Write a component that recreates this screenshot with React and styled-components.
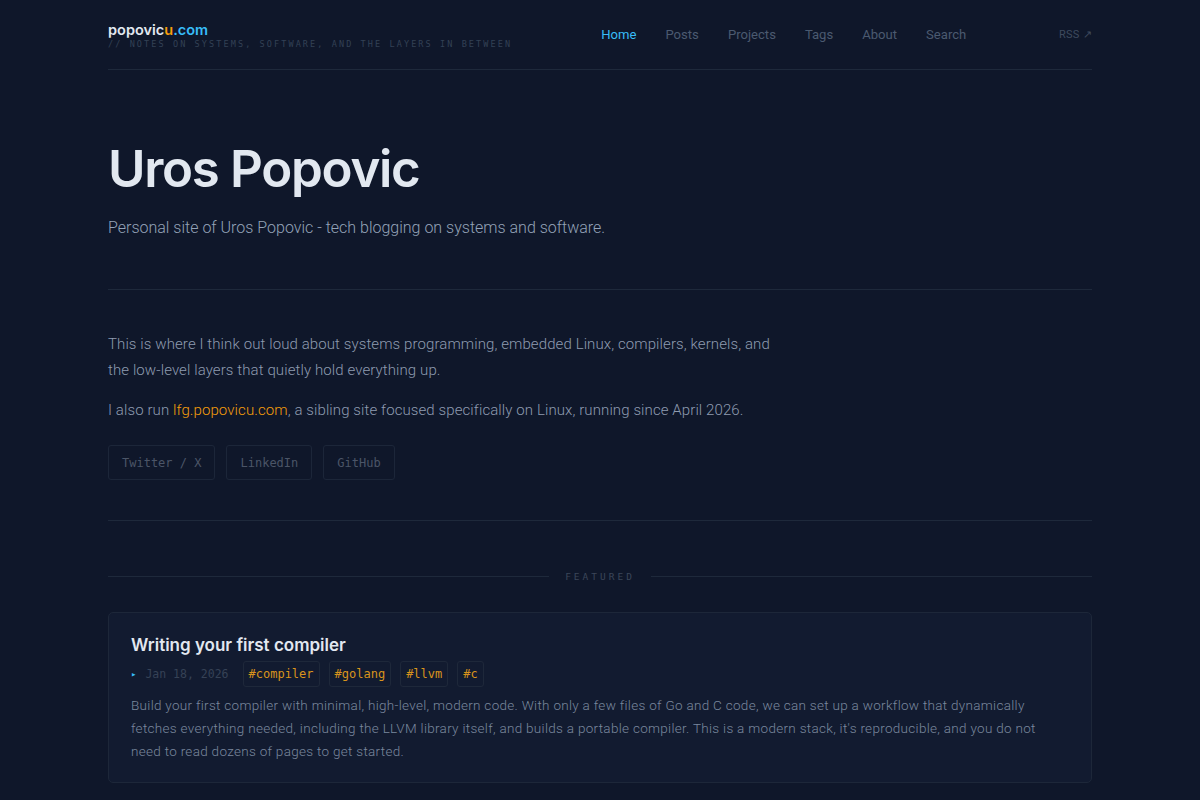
import React from 'react'
import styled, { createGlobalStyle } from 'styled-components'

const GlobalStyle = createGlobalStyle`
  html, body {
    margin: 0;
    padding: 0;
    background: #0f172a;
  }
  body {
    font-family: Roboto, "Noto Sans", sans-serif;
    color: #94a3b8;
  }
  a { text-decoration: none; }
`

const mono = `"DejaVu Sans Mono", "Liberation Mono", monospace`
const display = `Inter, "Noto Sans", sans-serif`

const Page = styled.div`
  min-height: 800px;
  background: #0f172a;
`

const Container = styled.div`
  width: 984px;
  margin: 0 auto;
`

const Header = styled.header`
  display: flex;
  align-items: center;
  height: 69px;
  border-bottom: 1px solid #1e293b;
`

const Brand = styled.div`
  display: flex;
  flex-direction: column;
  padding-top: 2px;
`

const Logo = styled.a`
  font-family: ${display};
  font-weight: 600;
  font-size: 14.5px;
  line-height: 16px;
  color: #e2e8f0;
  span { color: #f59e0b; }
  em { font-style: normal; color: #38bdf8; }
`

const Tagline = styled.div`
  font-family: ${mono};
  font-size: 8.5px;
  letter-spacing: 2.1px;
  color: #334155;
  margin-top: 1px;
  text-transform: uppercase;
`

const Nav = styled.nav`
  display: flex;
  gap: 29px;
  margin-left: 89px;
`

const NavLink = styled.a`
  font-family: Roboto, sans-serif;
  font-size: 13.1px;
  color: ${p => (p.$active ? '#38bdf8' : '#4b5a70')};
`

const Rss = styled.a`
  margin-left: auto;
  font-size: 11px;
  color: #3e4a5e;
  letter-spacing: 0.3px;
`

const Hero = styled.section`
  padding: 68px 0 52px;
  border-bottom: 1px solid #1e293b;
`

const Title = styled.h1`
  margin: 0;
  font-family: ${display};
  font-weight: 600;
  font-size: 51px;
  letter-spacing: -1.3px;
  line-height: 62px;
  color: #e2e8f0;
`

const Subtitle = styled.p`
  margin: 18px 0 0;
  font-size: 16px;
  font-weight: 300;
  color: #94a3b8;
`

const Intro = styled.section`
  padding: 41px 0 40px;
  border-bottom: 1px solid #1e293b;
`

const Para = styled.p`
  margin: 0 0 14px;
  max-width: 680px;
  font-size: 15px;
  font-weight: 300;
  line-height: 26px;
  letter-spacing: 0.1px;
  color: #8e9bb0;
  a { color: #f59e0b; }
`

const Socials = styled.div`
  display: flex;
  gap: 11px;
  margin-top: 22px;
`

const SocialBtn = styled.a`
  display: inline-flex;
  align-items: center;
  height: 33px;
  padding: 0 13px;
  border: 1px solid #1c2639;
  border-radius: 3px;
  font-family: ${mono};
  font-size: 12px;
  color: #4b5567;
`

const Featured = styled.section`
  padding-top: 50px;
`

const SectionLabel = styled.div`
  display: flex;
  align-items: center;
  gap: 16px;
  font-family: ${mono};
  font-size: 9.5px;
  letter-spacing: 3px;
  color: #3b4659;
  &::before, &::after {
    content: '';
    flex: 1;
    height: 1px;
    background: #1e293b;
  }
`

const Card = styled.article`
  margin-top: 30px;
  padding: 20px 22px 19px;
  background: #121b30;
  border: 1px solid #1d2739;
  border-radius: 5px;
`

const CardTitle = styled.h2`
  margin: 0;
  font-family: ${display};
  font-weight: 600;
  font-size: 17px;
  line-height: 24px;
  color: #e2e8f0;
`

const Meta = styled.div`
  display: flex;
  align-items: center;
  gap: 9px;
  margin-top: 4px;
`

const Date = styled.span`
  display: inline-flex;
  align-items: center;
  gap: 9px;
  margin-right: 5px;
  font-family: ${mono};
  font-size: 11.5px;
  color: #364256;
  &::before {
    content: '▸';
    color: #38bdf8;
    font-size: 9px;
  }
`

const Tag = styled.span`
  display: inline-flex;
  align-items: center;
  height: 24px;
  padding: 0 5px;
  border: 1px solid #1e283a;
  border-radius: 3px;
  font-family: ${mono};
  font-size: 12px;
  color: #d9941c;
`

const Desc = styled.p`
  margin: 7px 0 0;
  font-size: 13.5px;
  font-weight: 300;
  line-height: 23px;
  letter-spacing: 0.3px;
  color: #7a889e;
`

const navItems = ['Home', 'Posts', 'Projects', 'Tags', 'About', 'Search']
const socials = ['Twitter / X', 'LinkedIn', 'GitHub']
const tags = ['#compiler', '#golang', '#llvm', '#c']

export default function App() {
  return (
    <Page>
      <GlobalStyle />
      <Container>
        <Header>
          <Brand>
            <Logo href="#">popovic<span>u</span><em>.com</em></Logo>
            <Tagline>// notes on systems, software, and the layers in between</Tagline>
          </Brand>
          <Nav>
            {navItems.map((item, i) => (
              <NavLink key={item} href="#" $active={i === 0}>{item}</NavLink>
            ))}
          </Nav>
          <Rss href="#">RSS ↗</Rss>
        </Header>

        <Hero>
          <Title>Uros Popovic</Title>
          <Subtitle>Personal site of Uros Popovic - tech blogging on systems and software.</Subtitle>
        </Hero>

        <Intro>
          <Para>
            This is where I think out loud about systems programming, embedded Linux, compilers, kernels, and
            the low-level layers that quietly hold everything up.
          </Para>
          <Para>
            I also run <a href="#">lfg.popovicu.com</a>, a sibling site focused specifically on Linux, running since April 2026.
          </Para>
          <Socials>
            {socials.map(s => <SocialBtn key={s} href="#">{s}</SocialBtn>)}
          </Socials>
        </Intro>

        <Featured>
          <SectionLabel>FEATURED</SectionLabel>
          <Card>
            <CardTitle>Writing your first compiler</CardTitle>
            <Meta>
              <Date>Jan 18, 2026</Date>
              {tags.map(t => <Tag key={t}>{t}</Tag>)}
            </Meta>
            <Desc>
              Build your first compiler with minimal, high-level, modern code. With only a few files of Go and C code, we can set up a workflow that dynamically<br />
              fetches everything needed, including the LLVM library itself, and builds a portable compiler. This is a modern stack, it's reproducible, and you do not<br />
              need to read dozens of pages to get started.
            </Desc>
          </Card>
        </Featured>
      </Container>
    </Page>
  )
}
